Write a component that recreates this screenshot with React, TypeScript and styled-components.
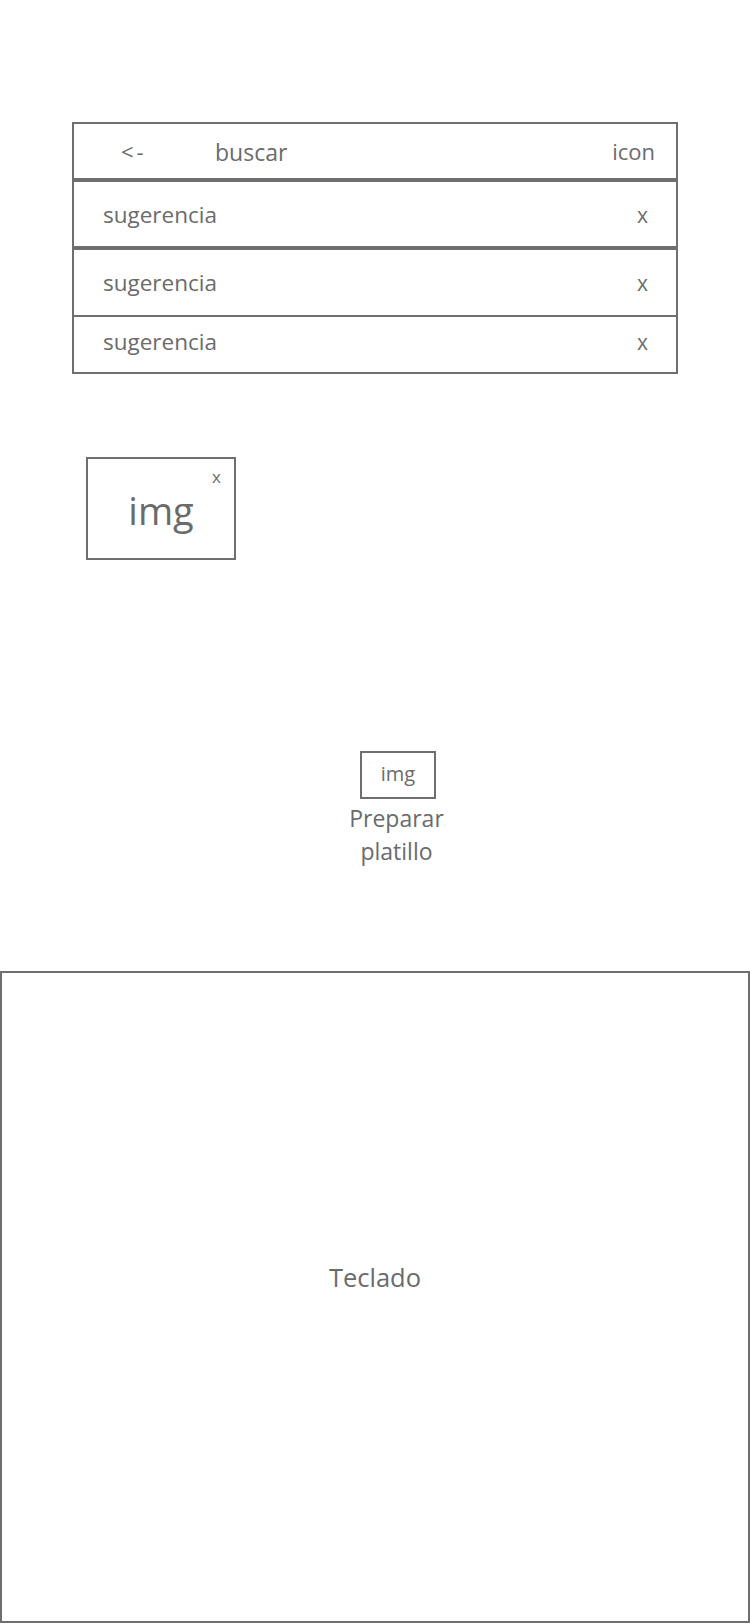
import React from "react";
import styled, { createGlobalStyle } from "styled-components";

const Global = createGlobalStyle`
  html, body { margin: 0; padding: 0; background: #ffffff; }
  body {
    font-family: "Open Sans", "Noto Sans", "Liberation Sans", sans-serif;
    color: #6b6b6b;
  }
  * { box-sizing: border-box; }
`;

const LINE = "#6f6f6f";

const Page = styled.div`
  width: 750px;
  height: 1624px;
  display: flex;
  flex-direction: column;
  overflow: hidden;
`;

const SearchPanel = styled.div`
  margin: 122px 0 0 72px;
  width: 606px;
  display: flex;
  flex-direction: column;
`;

const Header = styled.div`
  height: 58px;
  border: 2px solid ${LINE};
  display: flex;
  align-items: center;
  padding: 0 21px 0 47px;
  line-height: 1;
`;

const Back = styled.span`
  width: 94px;
  font-size: 22px;
  letter-spacing: 3px;
`;

const Query = styled.span`
  font-size: 23px;
  padding-top: 3px;
`;

const IconLabel = styled.span`
  margin-left: auto;
  font-size: 22px;
`;

const Box = styled.div<{ $h: number }>`
  height: ${(p) => p.$h}px;
  border: 2px solid ${LINE};
  display: flex;
  flex-direction: column;
`;

const Row = styled.div<{ $h: number; $divider?: boolean; $shift?: number }>`
  height: ${(p) => p.$h}px;
  flex: none;
  display: flex;
  align-items: center;
  justify-content: space-between;
  padding: 0 28px 0 29px;
  padding-top: ${(p) => Math.max(0, p.$shift ?? 2)}px;
  padding-bottom: ${(p) => Math.max(0, -(p.$shift ?? 2))}px;
  font-size: 22.5px;
  line-height: 1;
  border-bottom: ${(p) => (p.$divider ? `2px solid ${LINE}` : "none")};
`;

const Close = styled.span`
  font-size: 21px;
`;

const Thumb = styled.div`
  position: relative;
  margin: 83px 0 0 86px;
  width: 150px;
  height: 103px;
  border: 2px solid ${LINE};
  display: flex;
  align-items: center;
  justify-content: center;
  padding-top: 2px;
  font-size: 38px;
  line-height: 1;
`;

const ThumbClose = styled.span`
  position: absolute;
  top: 9px;
  right: 13px;
  font-size: 17px;
  line-height: 1;
`;

const Action = styled.div`
  margin: 191px 0 0 338px;
  width: 120px;
  display: flex;
  flex-direction: column;
  align-items: center;
`;

const SmallBox = styled.div`
  width: 76px;
  height: 48px;
  border: 2px solid ${LINE};
  display: flex;
  align-items: center;
  justify-content: center;
  font-size: 20px;
  line-height: 1;
  padding-bottom: 2px;
`;

const ActionLabel = styled.div`
  margin-top: 3px;
  font-size: 23px;
  line-height: 33px;
  text-align: center;
  margin-left: -3px;
`;

const Keyboard = styled.div`
  margin-top: 103px;
  width: 750px;
  height: 652px;
  flex: none;
  border: 2px solid ${LINE};
  display: flex;
  align-items: center;
  justify-content: center;
  padding-bottom: 38px;
  font-size: 25.5px;
  line-height: 1;
`;

const suggestions = ["sugerencia", "sugerencia", "sugerencia"];

export default function App() {
  return (
    <>
      <Global />
      <Page>
        <SearchPanel>
          <Header>
            <Back>&lt;-</Back>
            <Query>buscar</Query>
            <IconLabel>icon</IconLabel>
          </Header>
          <Box $h={68}>
            <Row $h={64}>
              <span>{suggestions[0]}</span>
              <Close>x</Close>
            </Row>
          </Box>
          <Box $h={126}>
            <Row $h={67} $divider>
              <span>{suggestions[1]}</span>
              <Close>x</Close>
            </Row>
            <Row $h={55} $shift={-4}>
              <span>{suggestions[2]}</span>
              <Close>x</Close>
            </Row>
          </Box>
        </SearchPanel>

        <Thumb>
          img
          <ThumbClose>x</ThumbClose>
        </Thumb>

        <Action>
          <SmallBox>img</SmallBox>
          <ActionLabel>
            Preparar
            <br />
            platillo
          </ActionLabel>
        </Action>

        <Keyboard>Teclado</Keyboard>
      </Page>
    </>
  );
}
